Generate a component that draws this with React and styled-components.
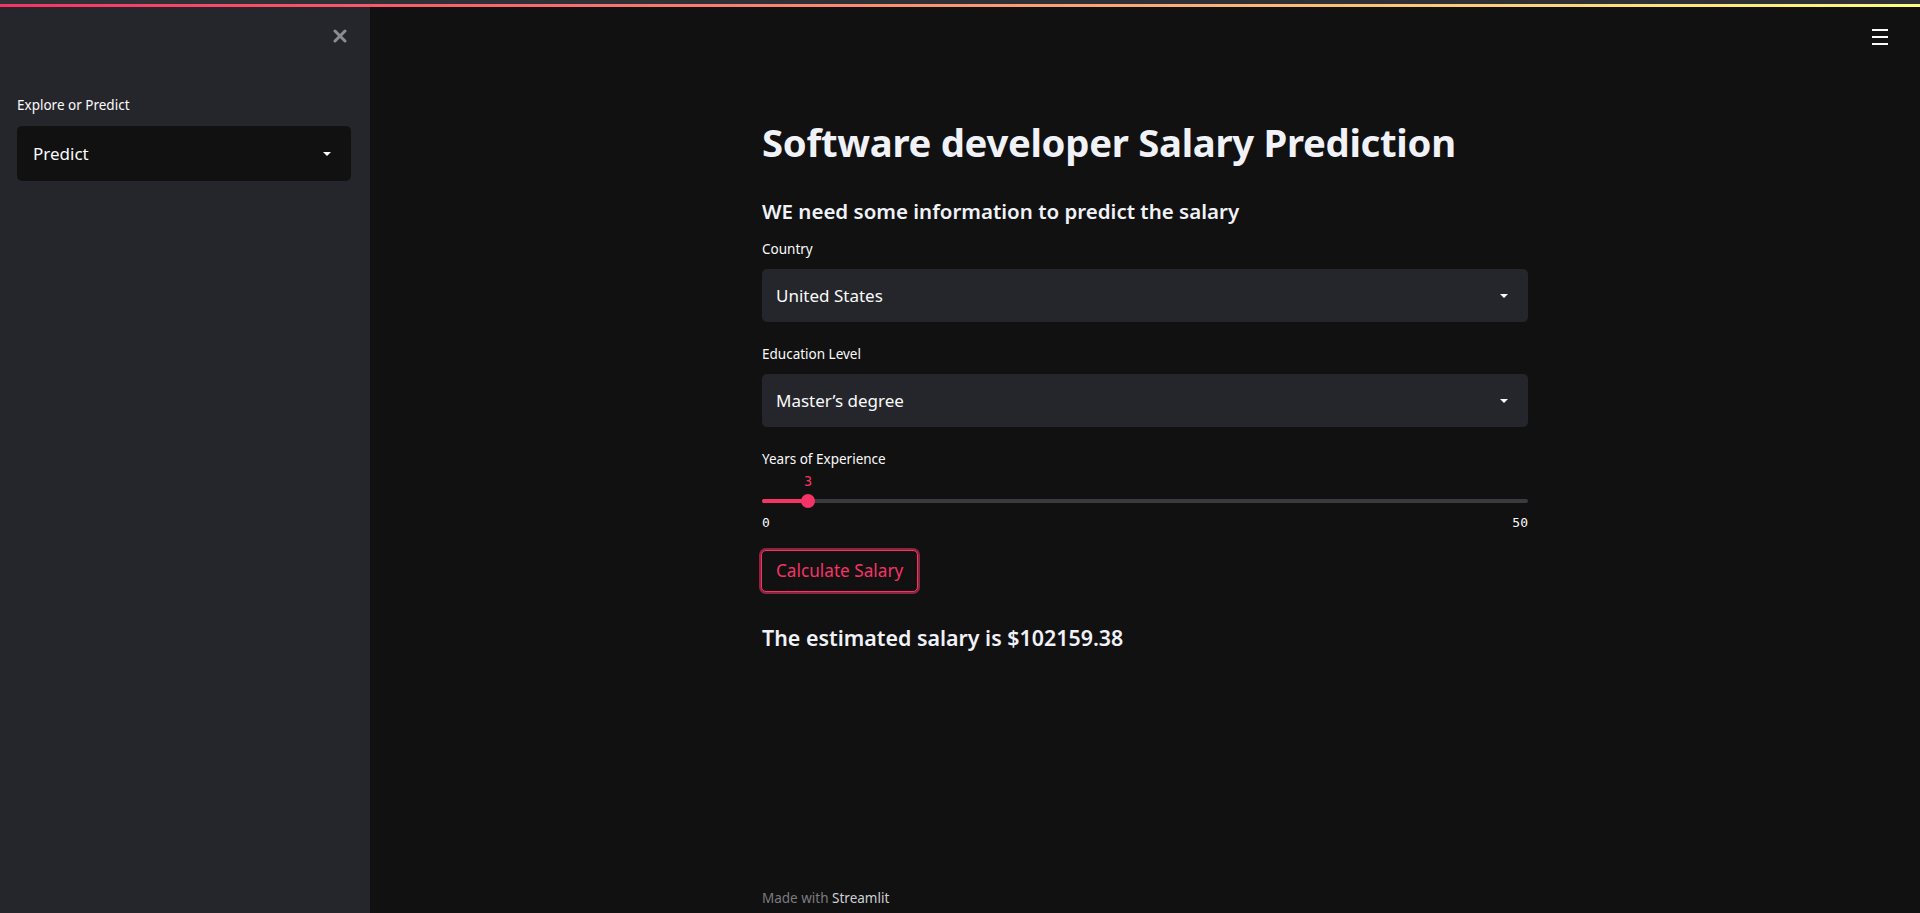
import React from "react";
import styled, { createGlobalStyle } from "styled-components";

const GlobalStyle = createGlobalStyle`
  html, body {
    margin: 0;
    padding: 0;
    background: #111111;
    font-family: "Noto Sans", "Open Sans", sans-serif;
    color: #fafafa;
  }
  * { box-sizing: border-box; }
`;

const Shell = styled.div`
  width: 1920px;
  height: 913px;
  display: flex;
  flex-direction: column;
  overflow: hidden;
`;

const Decoration = styled.div`
  height: 7px;
  border-top: 4px solid #2f3035;
  background: linear-gradient(90deg, #f63366, #fffd80);
  flex: none;
`;

const Body = styled.div`
  flex: 1;
  display: flex;
  min-height: 0;
`;

const Sidebar = styled.aside`
  width: 370px;
  flex: none;
  background: #25262b;
  padding: 0 19px 0 17px;
  display: flex;
  flex-direction: column;
`;

const CloseRow = styled.div`
  display: flex;
  justify-content: flex-end;
  padding-top: 21px;
  padding-right: 3px;
  height: 88px;
  flex: none;
`;

const CloseButton = styled.button`
  width: 16px;
  height: 16px;
  padding: 0;
  border: none;
  background: none;
  display: flex;
  align-items: center;
  justify-content: center;
  cursor: pointer;
`;

const Main = styled.main`
  flex: 1;
  position: relative;
  display: flex;
  flex-direction: column;
  align-items: center;
`;

const MenuButton = styled.button`
  position: absolute;
  top: 22px;
  right: 32px;
  width: 16px;
  height: 16px;
  padding: 0;
  border: none;
  background: none;
  display: flex;
  flex-direction: column;
  justify-content: space-between;
  span {
    display: block;
    height: 2px;
    background: #fafafa;
  }
`;

const Content = styled.div`
  width: 766px;
  padding-top: 111px;
  display: flex;
  flex-direction: column;
`;

const Title = styled.h1`
  margin: 0;
  font-size: 38.3px;
  line-height: 48px;
  font-weight: 700;
  letter-spacing: -0.3px;
  color: #f0f2f8;
`;

const Subheader = styled.h3`
  margin: 30px 0 0;
  font-size: 20.5px;
  line-height: 30px;
  font-weight: 600;
  color: #f0f2f8;
`;

const Label = styled.label`
  display: block;
  font-size: 13.5px;
  line-height: 20px;
  color: #fafafa;
  margin-top: ${(p) => p.$top || 0}px;
  margin-bottom: ${(p) => (p.$bottom === undefined ? 10 : p.$bottom)}px;
`;

const Select = styled.div`
  height: ${(p) => p.$height || 53}px;
  flex: none;
  border-radius: 5px;
  background: ${(p) => (p.$dark ? "#111111" : "#25262b")};
  display: flex;
  align-items: center;
  justify-content: space-between;
  padding: 0 20px 0 ${(p) => p.$pad || 14}px;
  font-size: 17px;
  color: #fafafa;
`;

const Caret = styled.span`
  width: 0;
  height: 0;
  border-left: 4px solid transparent;
  border-right: 4px solid transparent;
  border-top: 4px solid #fafafa;
`;

const SliderBox = styled.div`
  position: relative;
  height: 81px;
  font-family: "DejaVu Sans Mono", "Liberation Mono", monospace;
  font-size: 13px;
`;

const Track = styled.div`
  position: absolute;
  left: 0;
  right: 0;
  top: 30px;
  height: 4px;
  border-radius: 2px;
  background: #3a3b40;
`;

const Fill = styled.div`
  height: 100%;
  border-radius: 2px;
  background: #f63366;
`;

const Thumb = styled.div`
  position: absolute;
  top: -5px;
  width: 14px;
  height: 14px;
  margin-left: -7px;
  border-radius: 50%;
  background: #f63366;
`;

const ThumbValue = styled.div`
  position: absolute;
  top: -26px;
  width: 30px;
  margin-left: -15px;
  text-align: center;
  color: #f63366;
  font-size: 13.5px;
  line-height: 16px;
`;

const Ticks = styled.div`
  position: absolute;
  left: 0;
  right: 0;
  top: 46px;
  display: flex;
  justify-content: space-between;
  color: #fafafa;
  line-height: 16px;
`;

const Button = styled.button`
  align-self: flex-start;
  margin-left: -1px;
  height: 42px;
  padding: 0 14px;
  border-radius: 5px;
  border: 1px solid #f63366;
  box-shadow: 0 0 0 2px rgba(246, 51, 102, 0.55);
  background: #111111;
  color: #f63366;
  font-family: "Noto Sans", "Open Sans", sans-serif;
  font-size: 17.2px;
  cursor: pointer;
`;

const Result = styled.h3`
  margin: 31px 0 0;
  font-size: 21.4px;
  line-height: 30px;
  font-weight: 600;
  color: #f0f2f8;
`;

const Footer = styled.footer`
  margin-top: auto;
  width: 766px;
  padding-bottom: 5px;
  font-size: 13.5px;
  line-height: 20px;
  color: #7b7b80;
  b {
    font-weight: 400;
    color: #cfd0d4;
  }
`;

function Slider({ value, min, max }) {
  const pct = ((value - min) / (max - min)) * 100;
  return (
    <SliderBox>
      <Track>
        <Fill style={{ width: `${pct}%` }} />
        <Thumb style={{ left: `${pct}%` }} />
        <ThumbValue style={{ left: `${pct}%` }}>{value}</ThumbValue>
      </Track>
      <Ticks>
        <span>{min}</span>
        <span>{max}</span>
      </Ticks>
    </SliderBox>
  );
}

export default function App() {
  return (
    <Shell>
      <GlobalStyle />
      <Decoration />
      <Body>
        <Sidebar>
          <CloseRow>
            <CloseButton aria-label="close">
              <svg width="14" height="14" viewBox="0 0 14 14">
                <path d="M2 2L12 12M12 2L2 12" stroke="#8b8c90" strokeWidth="3" strokeLinecap="round" />
              </svg>
            </CloseButton>
          </CloseRow>
          <Label $bottom={11}>Explore or Predict</Label>
          <Select $dark $height={55} $pad={16}>
            <span>Predict</span>
            <Caret />
          </Select>
        </Sidebar>
        <Main>
          <MenuButton aria-label="menu">
            <span />
            <span />
            <span />
          </MenuButton>
          <Content>
            <Title>Software developer Salary Prediction</Title>
            <Subheader>WE need some information to predict the salary</Subheader>
            <Label $top={13}>Country</Label>
            <Select>
              <span>United States</span>
              <Caret />
            </Select>
            <Label $top={22}>Education Level</Label>
            <Select>
              <span>Master’s degree</span>
              <Caret />
            </Select>
            <Label $top={21.5} $bottom={0}>Years of Experience</Label>
            <Slider value={3} min={0} max={50} />
            <Button>Calculate Salary</Button>
            <Result>The estimated salary is $102159.38</Result>
          </Content>
          <Footer>
            Made with <b>Streamlit</b>
          </Footer>
        </Main>
      </Body>
    </Shell>
  );
}
